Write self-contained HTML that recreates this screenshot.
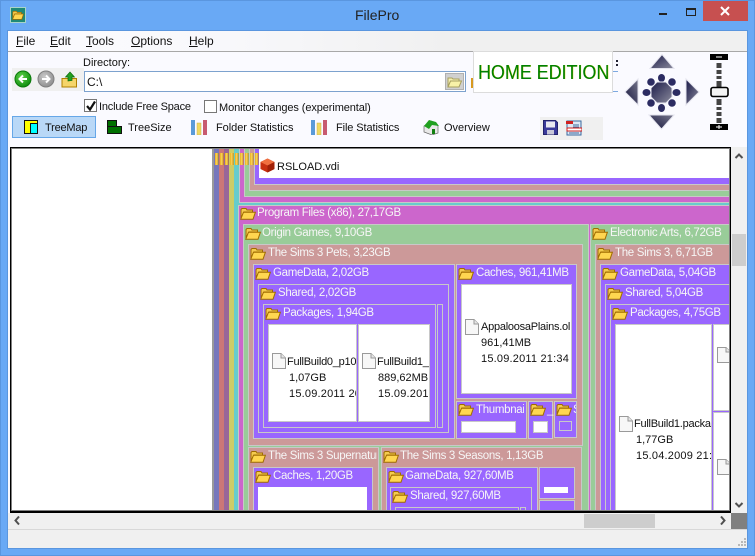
<!DOCTYPE html>
<html><head><meta charset="utf-8"><title>FilePro</title>
<style>
html,body{margin:0;padding:0;width:755px;height:556px;overflow:hidden;background:#69a9f5}
*{box-sizing:border-box}
body{font:11px "Liberation Sans",sans-serif;color:#111;position:relative}
.a,.b,.t,.l,svg.i,svg.f,svg.d{position:absolute}
.t{white-space:nowrap;line-height:14px}
.b{border:1px solid #c8c8c8}
.n{border:0}
.l{white-space:nowrap;line-height:14px;color:#f6f6f6;font-size:11.5px;letter-spacing:-.32px;margin-top:1px}
.w{background:#fff}.p{background:#9966ff}.s{background:#cc9999}.g{background:#99cc99}.m{background:#cc66cc}
u{text-decoration:underline}
svg.f{width:16px;height:13px;overflow:visible}
svg.d{width:14px;height:16px}
.fn{position:absolute;white-space:nowrap;line-height:14px;color:#111}
.nm{letter-spacing:-.25px}
.dt{letter-spacing:.2px}
.menu{position:absolute;top:34px;font-size:12px;line-height:14px;color:#111}
</style></head><body>
<svg width="0" height="0" style="position:absolute">
<defs>
<symbol id="fo" viewBox="0 0 16 13"><path d="M1 11V2.500L2 1.500h4l1 1.500h5.500V5H4z" fill="#f4cb50" stroke="#a06c00"/><path d="M.7 12.300 3.500 5.200H15.400L13 12.300z" fill="#ffd650" stroke="#a06c00"/></symbol>
<symbol id="do" viewBox="0 0 14 16"><path d="M.5.500H9L13.500 5V15.500H.5z" fill="#f7f7f7" stroke="#9a9a9a"/><path d="M9 .5V5H13.500" fill="#e6e6e6" stroke="#9a9a9a"/></symbol>
<linearGradient id="jg" x1="0" y1="0" x2="1" y2="1"><stop offset="0" stop-color="#1a1a48"/><stop offset="1" stop-color="#8a8a9c"/></linearGradient>
<linearGradient id="jd" x1="0" y1="1" x2="1" y2="0"><stop offset="0" stop-color="#14143c"/><stop offset="1" stop-color="#77778c"/></linearGradient>
<radialGradient id="gb" cx=".4" cy=".35" r=".7"><stop offset="0" stop-color="#5fd04a"/><stop offset="1" stop-color="#0b8a0b"/></radialGradient>
<radialGradient id="gy" cx=".4" cy=".35" r=".7"><stop offset="0" stop-color="#c8c8c8"/><stop offset="1" stop-color="#8c8c8c"/></radialGradient>
</defs></svg>

<!-- title bar -->
<div class="a" style="left:0;top:0;width:755px;height:1px;background:#5a96df"></div>
<div class="a" style="left:0;top:0;width:1px;height:556px;background:#5a96df"></div>
<div class="a" style="left:754px;top:0;width:1px;height:556px;background:#5a96df"></div>
<div class="a" style="left:0;top:555px;width:755px;height:1px;background:#5a96df"></div>
<div class="a" style="left:10px;top:7px;width:16px;height:16px;background:#1f8a78;border:1px solid #a8d4c8"></div>
<svg class="f" style="left:12px;top:10px;width:12px;height:10px"><use href="#fo"/></svg>
<div class="t" style="left:355px;top:7px;font-size:14px;line-height:16px;color:#222">FilePro</div>
<div class="a" style="left:659px;top:13px;width:8px;height:2px;background:#222"></div>
<div class="a" style="left:686px;top:8px;width:10px;height:8px;border:1px solid #222;border-top-width:2px"></div>
<div class="a" style="left:703px;top:1px;width:45px;height:20px;background:#c75050"></div>
<svg class="a" style="left:719px;top:6px" width="12" height="10"><path d="M2 1 10 9M10 1 2 9" stroke="#fff" stroke-width="2"/></svg>

<!-- client -->
<div class="a" style="left:7px;top:30px;width:741px;height:519px;background:#5a96df"></div>
<div class="a" style="left:8px;top:31px;width:739px;height:517px;background:#fafaff"></div>
<!-- menu -->
<div class="a" style="left:8px;top:31px;width:739px;height:20px;background:linear-gradient(90deg,#fbfbff 0,#f8f8fb 30%,#f0f0f0 60%,#f0f0f0 100%)"></div>
<div class="a" style="left:8px;top:51px;width:739px;height:1px;background:#a8a8a8"></div>
<div class="menu" style="left:16px"><u>F</u>ile</div>
<div class="menu" style="left:50px"><u>E</u>dit</div>
<div class="menu" style="left:86px"><u>T</u>ools</div>
<div class="menu" style="left:131px"><u>O</u>ptions</div>
<div class="menu" style="left:189px"><u>H</u>elp</div>

<!-- address row -->
<div class="t" style="left:83px;top:56px">Directory:</div>
<div class="a" style="left:12px;top:68px;width:72px;height:23px;background:#f0f0f0"></div>
<svg class="a" style="left:14px;top:70px" width="64" height="20">
<circle cx="9" cy="9" r="8" fill="url(#gb)" stroke="#0a7a0a"/><path d="M13 9H6M9 5.500 5.500 9 9 12.500" stroke="#fff" stroke-width="2" fill="none"/>
<circle cx="32" cy="9" r="8" fill="url(#gy)" stroke="#808080"/><path d="M28 9h7M32 5.500 35.500 9 32 12.500" stroke="#fff" stroke-width="2" fill="none"/>
<path d="M48 8.500h14.500V17H48z" fill="#f5d56a" stroke="#b08000"/><path d="M54 11V7H51.500L56 2l4.500 5H58v3.500z" fill="#23a020" stroke="#0a6a0a" stroke-width=".7"/>
</svg>
<div class="a" style="left:84px;top:71px;width:382px;height:21px;background:#fff;border:1px solid #7da2ce"></div>
<div class="t" style="left:87px;top:75px;font-size:12px">C:\</div>
<div class="a" style="left:445px;top:73px;width:19px;height:17px;background:#d0d0d0;border:1px solid #b0b0b0"></div>
<svg class="f" style="left:447px;top:76px;width:15px;height:12px"><path d="M1 10V2h4l1 1h6v2H4z" fill="#f5efb0" stroke="#a8a060"/><path d="M1 11 3.500 5H14.500L12 11z" fill="#f8f2a8" stroke="#a8a060"/></svg>
<div class="a" style="left:471px;top:78px;width:3px;height:10px;background:#d89a20"></div>
<div class="a" style="left:612px;top:71px;width:6px;height:1px;background:#7da9e0"></div>
<div class="a" style="left:612px;top:91px;width:6px;height:1px;background:#7da9e0"></div>
<div class="a" style="left:616px;top:60px;width:2px;height:2px;background:#223"></div>
<div class="a" style="left:616px;top:64px;width:2px;height:2px;background:#223"></div>
<div class="a" style="left:473px;top:51px;width:140px;height:42px;background:#fff;border:1px solid #dcdcdc"></div>
<div class="t" style="left:478px;top:61px;font-size:20px;line-height:24px;color:#008000;transform:scaleX(.895);transform-origin:0 0;text-shadow:.4px 0 #c8c800">HOME EDITION</div>

<!-- checks -->
<div class="a" style="left:84px;top:99px;width:13px;height:13px;border:1px solid #777;background:#fff"></div>
<svg class="a" style="left:85px;top:100px" width="12" height="12"><path d="M2 6 5 9.500 10 1.500" stroke="#111" stroke-width="2.200" fill="none"/></svg>
<div class="t" style="left:99px;top:100px;letter-spacing:-.2px">Include Free Space</div>
<div class="a" style="left:204px;top:100px;width:13px;height:13px;border:1px solid #777;background:#fff"></div>
<div class="t" style="left:219px;top:101px;letter-spacing:-.1px">Monitor changes (experimental)</div>

<!-- tabs -->
<div class="a" style="left:12px;top:116px;width:84px;height:22px;background:#b9d8f7;border:1px solid #66a7e8"></div>
<div class="a" style="left:24px;top:120px;width:14px;height:14px;background:#ffff00;border:1px solid #111"></div>
<div class="a" style="left:30px;top:123px;width:8px;height:11px;background:#00ffff;border:1px solid #111"></div>
<div class="t" style="left:45px;top:121px;letter-spacing:-.2px">TreeMap</div>
<svg class="a" style="left:107px;top:120px" width="15" height="14"><path d="M.5.500h9v6h5v7H.5z" fill="#007000" stroke="#111"/><path d="M.5 6.500h9M.5 6.500v7" stroke="#111"/></svg>
<div class="t" style="left:128px;top:121px">TreeSize</div>
<svg class="a" style="left:191px;top:120px" width="17" height="15"><rect x="0" y="0" width="4" height="15" fill="#5a9ad8"/><rect x="6" y="3" width="4" height="12" fill="#f0d860" stroke="#c8b050" stroke-width=".5"/><rect x="12" y="0" width="4" height="15" fill="#c85a70"/></svg>
<div class="t" style="left:216px;top:121px;letter-spacing:-.05px">Folder Statistics</div>
<svg class="a" style="left:311px;top:120px" width="17" height="15"><rect x="0" y="0" width="4" height="15" fill="#5a9ad8"/><rect x="6" y="3" width="4" height="12" fill="#f0d860" stroke="#c8b050" stroke-width=".5"/><rect x="12" y="0" width="4" height="15" fill="#c85a70"/></svg>
<div class="t" style="left:336px;top:121px;letter-spacing:-.1px">File Statistics</div>
<svg class="a" style="left:423px;top:119px" width="17" height="16"><path d="M1 7 8 2l7 5v7l-6 2-8-3z" fill="#e8e8e8" stroke="#666" stroke-width=".7"/><path d="M1 7 6 1l7 2 3 4-7-1-3 4z" fill="#20a020"/><rect x="9" y="10" width="3" height="5" fill="#108010"/></svg>
<div class="t" style="left:444px;top:121px">Overview</div>
<div class="a" style="left:540px;top:117px;width:63px;height:23px;background:#f0f0f0"></div>
<svg class="a" style="left:543px;top:120px" width="15" height="15"><path d="M.5.500h12l2 2v12H.5z" fill="#3a3a9a" stroke="#22226a"/><rect x="3" y="1.500" width="9" height="6" fill="#e8e8f0"/><rect x="4" y="10" width="7" height="4.500" fill="#c8c8d8"/></svg>
<svg class="a" style="left:566px;top:120px" width="16" height="16"><rect x="1" y="1" width="14" height="14" fill="#dfe8f5" stroke="#3a6aa0"/><path d="M7 5h6M7 7h6M3 11h10M3 13h10" stroke="#3a6aa0"/><rect x="0" y="1" width="7" height="3" fill="#d02020"/><rect x="1" y="8" width="15" height="3" fill="#fff" stroke="#d02020"/></svg>

<!-- joystick -->
<svg class="a" style="left:620px;top:52px" width="112" height="82">
<path d="M30 2.500 42 16.500H18z" transform="translate(12 0)" fill="url(#jg)" stroke="#e4e4ee"/>
<path d="M18 27 5 40 18 53z" fill="url(#jd)" stroke="#e4e4ee"/>
<path d="M66 27 79 40 66 53z" fill="url(#jg)" stroke="#e4e4ee"/>
<path d="M29 63H54L41.500 77z" fill="url(#jd)" stroke="#e4e4ee"/>
<g fill="#2c2c62">
<ellipse cx="41.500" cy="26" rx="3.500" ry="4"/><ellipse cx="41.500" cy="56" rx="3.500" ry="4"/><ellipse cx="26.500" cy="40.500" rx="4" ry="3.500"/><ellipse cx="56.500" cy="40.500" rx="4" ry="3.500"/>
<circle cx="31" cy="30" r="3.800"/><circle cx="52" cy="30" r="3.800"/><circle cx="31" cy="51" r="3.800"/><circle cx="52" cy="51" r="3.800"/></g>
<path d="M37 30H46L52 36V45L46 51H37L31 45V36z" fill="url(#jg)" stroke="#e8e8f2"/>
<rect x="90" y="2" width="18" height="6" fill="#000"/><rect x="96" y="4.500" width="6" height="1" fill="#fff"/>
<g fill="#444"><rect x="96.500" y="11" width="5" height="5"/><rect x="96.500" y="18" width="5" height="4"/><rect x="96.500" y="24" width="5" height="3"/><rect x="96.500" y="29" width="5" height="6"/>
<rect x="96.500" y="47" width="5" height="6"/><rect x="96.500" y="55" width="5" height="3"/><rect x="96.500" y="60" width="5" height="4"/><rect x="96.500" y="66" width="5" height="5"/></g>
<rect x="91" y="35.500" width="17" height="9" rx="2" fill="#f4f4f4" stroke="#000" stroke-width="1.600"/>
<rect x="90" y="72" width="18" height="6" fill="#000"/><path d="M96 75h6M99 73v4" stroke="#fff"/>
</svg>

<!-- treemap frame -->
<div class="a" style="left:10px;top:147px;width:721px;height:366px;background:#808080;border:1px solid #000;border-bottom-width:2px"></div>

<div class="a" style="left:12px;top:149px;width:717px;height:361px;overflow:hidden;background:#fff">
<div class="a" style="left:-12px;top:-149px;width:755px;height:556px">
<div class="a" style="left:212px;top:140px;width:2px;height:400px;background:#9a9a9a"></div>
<div class="a" style="left:214px;top:140px;width:530px;height:400px;background:#7777bb"></div>
<div class="a" style="left:219px;top:140px;width:530px;height:400px;background:#cc7777"></div>
<div class="a" style="left:224px;top:140px;width:530px;height:400px;background:#996699"></div>
<div class="a" style="left:229px;top:140px;width:530px;height:400px;background:#cccc66"></div>
<div class="a" style="left:234px;top:140px;width:530px;height:400px;background:#66cccc"></div>
<div class="b m" style="left:239px;top:140px;width:530px;height:63px"></div>
<div class="b g" style="left:244px;top:140px;width:530px;height:57px"></div>
<div class="b s" style="left:249px;top:140px;width:530px;height:51px"></div>
<div class="b p" style="left:254px;top:140px;width:530px;height:45px"></div>
<div class="a w" style="left:259px;top:140px;width:530px;height:38px"></div>
<div class="a" style="left:215px;top:153px;width:45px;height:12px;background:repeating-linear-gradient(90deg,#e8b020 0,#ffd860 2px,#a87400 3.500px,transparent 3.500px,transparent 5px)"></div>
<svg class="a" style="left:260px;top:158px" width="15" height="15"><path d="M7.500.500 14.500 4V11L7.500 14.500.5 11V4z" fill="#c83010"/><path d="M.5 4 7.500.500 14.500 4 7.500 7.500z" fill="#f07040"/><path d="M7.500 7.500 14.500 4V11L7.500 14.500z" fill="#a02008"/></svg>
<div class="a" style="left:277px;top:159px;width:120px;height:11px;overflow:hidden"><span class="fn" style="left:0;top:1px;font-size:11px">RSLOAD.vdi</span></div>

<!-- Program Files -->
<div class="b m" style="left:238px;top:205px;width:560px;height:340px"></div>
<svg class="f" style="left:240px;top:207px"><use href="#fo"/></svg><div class="l" style="left:257px;top:205px">Program Files (x86), 27,17GB</div>

<!-- Origin -->
<div class="b g" style="left:243px;top:224px;width:346px;height:320px"></div>
<svg class="f" style="left:245px;top:227px"><use href="#fo"/></svg><div class="l" style="left:262px;top:225px">Origin Games, 9,10GB</div>

<!-- Sims 3 Pets -->
<div class="b s" style="left:248px;top:244px;width:335px;height:202px"></div>
<svg class="f" style="left:250px;top:247px"><use href="#fo"/></svg><div class="l" style="left:268px;top:245px">The Sims 3 Pets, 3,23GB</div>
<div class="b p" style="left:253px;top:264px;width:202px;height:175px"></div>
<svg class="f" style="left:255px;top:267px"><use href="#fo"/></svg><div class="l" style="left:273px;top:265px">GameData, 2,02GB</div>
<div class="b p" style="left:258px;top:284px;width:191px;height:149px"></div>
<svg class="f" style="left:260px;top:287px"><use href="#fo"/></svg><div class="l" style="left:278px;top:285px">Shared, 2,02GB</div>
<div class="b p" style="left:263px;top:304px;width:173px;height:124px"></div>
<svg class="f" style="left:265px;top:307px"><use href="#fo"/></svg><div class="l" style="left:283px;top:305px">Packages, 1,94GB</div>
<div class="b p" style="left:437px;top:304px;width:6px;height:124px"></div>
<div class="b w" style="left:268px;top:324px;width:89px;height:98px;overflow:hidden">
<svg class="d" style="left:3px;top:28px"><use href="#do"/></svg>
<div class="fn nm" style="left:18px;top:30px">FullBuild0_p10</div><div class="fn" style="left:20px;top:46px">1,07GB</div><div class="fn dt" style="left:20px;top:62px">15.09.2011 20</div></div>
<div class="b w" style="left:358px;top:324px;width:72px;height:98px;overflow:hidden">
<svg class="d" style="left:3px;top:28px"><use href="#do"/></svg>
<div class="fn nm" style="left:18px;top:30px">FullBuild1_</div><div class="fn" style="left:19px;top:46px">889,62MB</div><div class="fn dt" style="left:19px;top:62px">15.09.201</div></div>

<div class="b p" style="left:456px;top:264px;width:121px;height:135px"></div>
<svg class="f" style="left:458px;top:267px"><use href="#fo"/></svg><div class="l" style="left:476px;top:265px">Caches, 961,41MB</div>
<div class="b w" style="left:461px;top:284px;width:111px;height:110px;overflow:hidden">
<svg class="d" style="left:3px;top:34px"><use href="#do"/></svg>
<div class="fn nm" style="left:19px;top:35px">AppaloosaPlains.ol</div><div class="fn" style="left:19px;top:51px">961,41MB</div><div class="fn dt" style="left:19px;top:67px">15.09.2011 21:34</div></div>

<div class="b p" style="left:456px;top:401px;width:71px;height:38px;overflow:hidden"></div>
<svg class="f" style="left:458px;top:403px"><use href="#fo"/></svg><div class="a" style="left:476px;top:402px;width:48px;height:15px;overflow:hidden"><span class="l" style="left:0;top:0">Thumbnails</span></div>
<div class="b w" style="left:461px;top:421px;width:55px;height:12px"></div>
<div class="b p" style="left:528px;top:401px;width:25px;height:38px"></div>
<svg class="f" style="left:530px;top:403px"><use href="#fo"/></svg><div class="l" style="left:547px;top:402px">_</div>
<div class="b w" style="left:533px;top:421px;width:15px;height:12px"></div>
<div class="b p" style="left:554px;top:401px;width:23px;height:37px"></div>
<svg class="f" style="left:556px;top:403px"><use href="#fo"/></svg><div class="a" style="left:573px;top:402px;width:3px;height:15px;overflow:hidden"><span class="l" style="left:0;top:0">S</span></div>
<div class="b p" style="left:559px;top:421px;width:13px;height:10px"></div>

<!-- Supernatural -->
<div class="b s" style="left:248px;top:447px;width:131px;height:100px"></div>
<svg class="f" style="left:250px;top:450px"><use href="#fo"/></svg><div class="a" style="left:268px;top:448px;width:109px;height:15px;overflow:hidden"><span class="l" style="left:0;top:0">The Sims 3 Supernatural</span></div>
<div class="b p" style="left:253px;top:467px;width:120px;height:80px"></div>
<svg class="f" style="left:255px;top:470px"><use href="#fo"/></svg><div class="l" style="left:273px;top:468px">Caches, 1,20GB</div>
<div class="a w" style="left:258px;top:487px;width:109px;height:40px"></div>

<!-- Seasons -->
<div class="b s" style="left:381px;top:447px;width:201px;height:100px"></div>
<svg class="f" style="left:383px;top:450px"><use href="#fo"/></svg><div class="l" style="left:400px;top:448px">The Sims 3 Seasons, 1,13GB</div>
<div class="b p" style="left:386px;top:467px;width:152px;height:80px"></div>
<svg class="f" style="left:388px;top:470px"><use href="#fo"/></svg><div class="l" style="left:405px;top:468px">GameData, 927,60MB</div>
<div class="b p" style="left:390px;top:487px;width:142px;height:60px"></div>
<svg class="f" style="left:392px;top:490px"><use href="#fo"/></svg><div class="l" style="left:410px;top:488px">Shared, 927,60MB</div>
<div class="b p" style="left:395px;top:507px;width:124px;height:40px"></div>
<div class="b p" style="left:520px;top:507px;width:6px;height:40px"></div>
<div class="b p" style="left:539px;top:467px;width:36px;height:32px"></div>
<div class="a w" style="left:544px;top:487px;width:24px;height:6px"></div>
<div class="b p" style="left:539px;top:500px;width:36px;height:40px"></div>

<!-- Electronic Arts -->
<div class="b g" style="left:590px;top:224px;width:200px;height:320px"></div>
<svg class="f" style="left:592px;top:227px"><use href="#fo"/></svg><div class="l" style="left:610px;top:225px">Electronic Arts, 6,72GB</div>
<div class="b s" style="left:595px;top:244px;width:190px;height:310px"></div>
<svg class="f" style="left:597px;top:247px"><use href="#fo"/></svg><div class="l" style="left:615px;top:245px">The Sims 3, 6,71GB</div>
<div class="b p" style="left:600px;top:264px;width:180px;height:290px"></div>
<svg class="f" style="left:602px;top:267px"><use href="#fo"/></svg><div class="l" style="left:620px;top:265px">GameData, 5,04GB</div>
<div class="b p" style="left:605px;top:284px;width:170px;height:270px"></div>
<svg class="f" style="left:607px;top:287px"><use href="#fo"/></svg><div class="l" style="left:625px;top:285px">Shared, 5,04GB</div>
<div class="b p" style="left:610px;top:304px;width:160px;height:250px"></div>
<svg class="f" style="left:612px;top:307px"><use href="#fo"/></svg><div class="l" style="left:630px;top:305px">Packages, 4,75GB</div>
<div class="b w" style="left:615px;top:324px;width:97px;height:220px;overflow:hidden">
<svg class="d" style="left:3px;top:91px"><use href="#do"/></svg>
<div class="fn nm" style="left:18px;top:92px">FullBuild1.packa</div><div class="fn" style="left:20px;top:108px">1,77GB</div><div class="fn dt" style="left:20px;top:124px">15.04.2009 21:</div></div>
<div class="b w" style="left:713px;top:324px;width:40px;height:87px"></div>
<svg class="d" style="left:717px;top:347px"><use href="#do"/></svg>
<div class="b w" style="left:713px;top:412px;width:40px;height:120px"></div>
<svg class="d" style="left:717px;top:459px"><use href="#do"/></svg>
</div></div>

<!-- scrollbars -->
<div class="a" style="left:731px;top:147px;width:16px;height:366px;background:#f0f0f0"></div>
<svg class="a" style="left:734px;top:152px" width="10" height="8"><path d="M1.500 6 5 2.500 8.500 6" fill="none" stroke="#505050" stroke-width="2"/></svg>
<div class="a" style="left:732px;top:234px;width:14px;height:32px;background:#cdcdcd"></div>
<svg class="a" style="left:734px;top:501px" width="10" height="8"><path d="M1.500 2 5 5.500 8.500 2" fill="none" stroke="#505050" stroke-width="2"/></svg>
<div class="a" style="left:8px;top:513px;width:723px;height:16px;background:#f0f0f0"></div>
<svg class="a" style="left:13px;top:515px" width="8" height="11"><path d="M6 1.500 2.500 5.500 6 9.500" fill="none" stroke="#505050" stroke-width="2"/></svg>
<div class="a" style="left:584px;top:514px;width:71px;height:14px;background:#cdcdcd"></div>
<svg class="a" style="left:719px;top:515px" width="8" height="11"><path d="M2 1.500 5.500 5.500 2 9.500" fill="none" stroke="#505050" stroke-width="2"/></svg>
<div class="a" style="left:731px;top:513px;width:16px;height:16px;background:#808080"></div>
<div class="a" style="left:8px;top:529px;width:739px;height:1px;background:#d8d8d8"></div>
<div class="a" style="left:8px;top:530px;width:739px;height:18px;background:#f0f0f0"></div>
<svg class="a" style="left:736px;top:537px" width="11" height="11"><g fill="#b8b8b8"><rect x="8" y="1" width="2" height="2"/><rect x="5" y="4" width="2" height="2"/><rect x="8" y="4" width="2" height="2"/><rect x="2" y="7" width="2" height="2"/><rect x="5" y="7" width="2" height="2"/><rect x="8" y="7" width="2" height="2"/></g></svg>
</body></html>
